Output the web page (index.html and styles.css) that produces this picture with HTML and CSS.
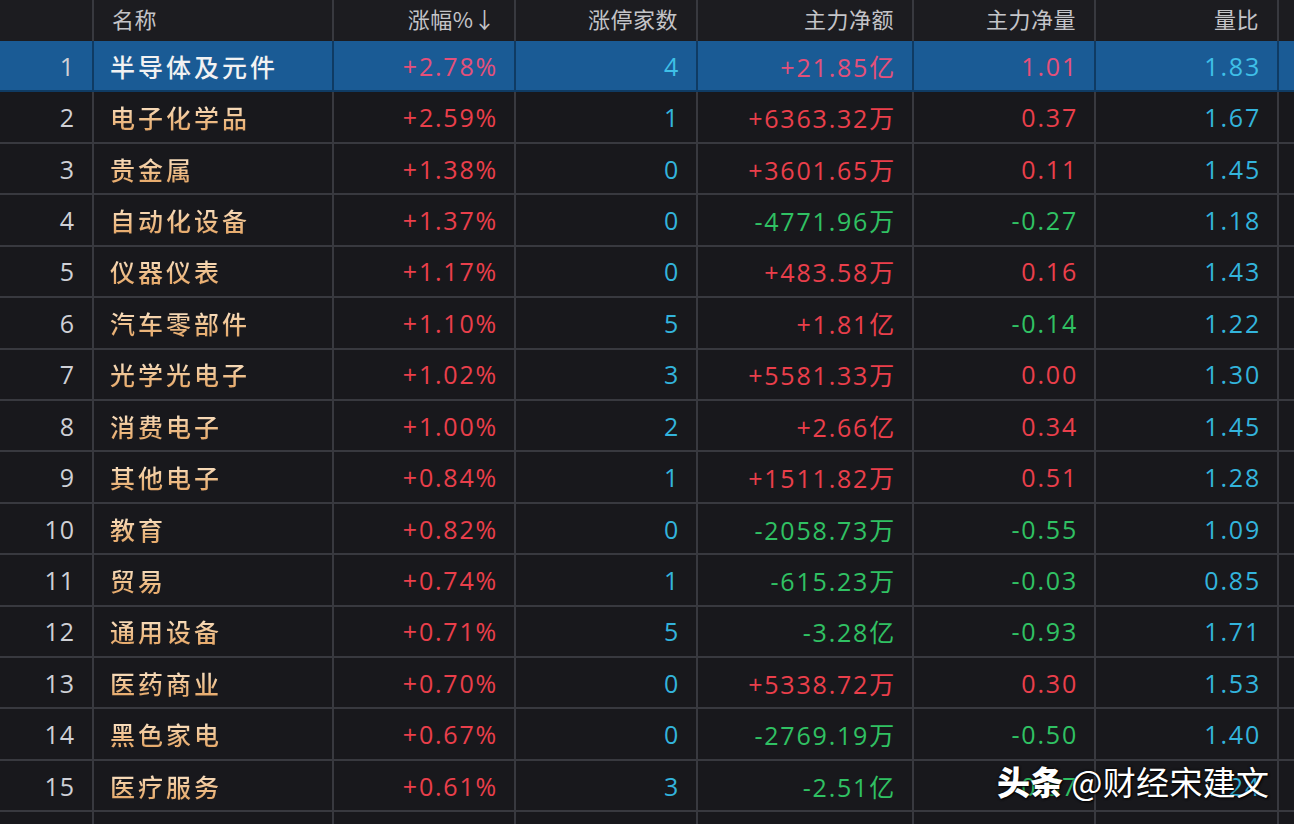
FILE: index.html
```html
<!DOCTYPE html>
<html lang="zh-CN">
<head>
<meta charset="utf-8">
<title>板块排行</title>
<link rel="stylesheet" href="styles.css">
</head>
<body>
<div class="board">
  <div class="row head">
    <div class="cell"></div>
    <div class="cell name">名称</div>
    <div class="cell">涨幅%↓</div>
    <div class="cell">涨停家数</div>
    <div class="cell">主力净额</div>
    <div class="cell">主力净量</div>
    <div class="cell">量比</div>
    <div class="cell last"></div>
  </div>
  <div class="row sel">
    <div class="cell idx">1</div><div class="cell name"><span class="nm">半导体及元件</span></div>
    <div class="cell up">+2.78%</div><div class="cell cy">4</div><div class="cell up">+21.85亿</div><div class="cell up">1.01</div><div class="cell cy">1.83</div><div class="cell last"></div>
  </div>
  <div class="row">
    <div class="cell idx">2</div><div class="cell name"><span class="nm">电子化学品</span></div>
    <div class="cell up">+2.59%</div><div class="cell cy">1</div><div class="cell up">+6363.32万</div><div class="cell up">0.37</div><div class="cell cy">1.67</div><div class="cell last"></div>
  </div>
  <div class="row">
    <div class="cell idx">3</div><div class="cell name"><span class="nm">贵金属</span></div>
    <div class="cell up">+1.38%</div><div class="cell cy">0</div><div class="cell up">+3601.65万</div><div class="cell up">0.11</div><div class="cell cy">1.45</div><div class="cell last"></div>
  </div>
  <div class="row">
    <div class="cell idx">4</div><div class="cell name"><span class="nm">自动化设备</span></div>
    <div class="cell up">+1.37%</div><div class="cell cy">0</div><div class="cell dn">-4771.96万</div><div class="cell dn">-0.27</div><div class="cell cy">1.18</div><div class="cell last"></div>
  </div>
  <div class="row">
    <div class="cell idx">5</div><div class="cell name"><span class="nm">仪器仪表</span></div>
    <div class="cell up">+1.17%</div><div class="cell cy">0</div><div class="cell up">+483.58万</div><div class="cell up">0.16</div><div class="cell cy">1.43</div><div class="cell last"></div>
  </div>
  <div class="row">
    <div class="cell idx">6</div><div class="cell name"><span class="nm">汽车零部件</span></div>
    <div class="cell up">+1.10%</div><div class="cell cy">5</div><div class="cell up">+1.81亿</div><div class="cell dn">-0.14</div><div class="cell cy">1.22</div><div class="cell last"></div>
  </div>
  <div class="row">
    <div class="cell idx">7</div><div class="cell name"><span class="nm">光学光电子</span></div>
    <div class="cell up">+1.02%</div><div class="cell cy">3</div><div class="cell up">+5581.33万</div><div class="cell up">0.00</div><div class="cell cy">1.30</div><div class="cell last"></div>
  </div>
  <div class="row">
    <div class="cell idx">8</div><div class="cell name"><span class="nm">消费电子</span></div>
    <div class="cell up">+1.00%</div><div class="cell cy">2</div><div class="cell up">+2.66亿</div><div class="cell up">0.34</div><div class="cell cy">1.45</div><div class="cell last"></div>
  </div>
  <div class="row">
    <div class="cell idx">9</div><div class="cell name"><span class="nm">其他电子</span></div>
    <div class="cell up">+0.84%</div><div class="cell cy">1</div><div class="cell up">+1511.82万</div><div class="cell up">0.51</div><div class="cell cy">1.28</div><div class="cell last"></div>
  </div>
  <div class="row">
    <div class="cell idx">10</div><div class="cell name"><span class="nm">教育</span></div>
    <div class="cell up">+0.82%</div><div class="cell cy">0</div><div class="cell dn">-2058.73万</div><div class="cell dn">-0.55</div><div class="cell cy">1.09</div><div class="cell last"></div>
  </div>
  <div class="row">
    <div class="cell idx">11</div><div class="cell name"><span class="nm">贸易</span></div>
    <div class="cell up">+0.74%</div><div class="cell cy">1</div><div class="cell dn">-615.23万</div><div class="cell dn">-0.03</div><div class="cell cy">0.85</div><div class="cell last"></div>
  </div>
  <div class="row">
    <div class="cell idx">12</div><div class="cell name"><span class="nm">通用设备</span></div>
    <div class="cell up">+0.71%</div><div class="cell cy">5</div><div class="cell dn">-3.28亿</div><div class="cell dn">-0.93</div><div class="cell cy">1.71</div><div class="cell last"></div>
  </div>
  <div class="row">
    <div class="cell idx">13</div><div class="cell name"><span class="nm">医药商业</span></div>
    <div class="cell up">+0.70%</div><div class="cell cy">0</div><div class="cell up">+5338.72万</div><div class="cell up">0.30</div><div class="cell cy">1.53</div><div class="cell last"></div>
  </div>
  <div class="row">
    <div class="cell idx">14</div><div class="cell name"><span class="nm">黑色家电</span></div>
    <div class="cell up">+0.67%</div><div class="cell cy">0</div><div class="cell dn">-2769.19万</div><div class="cell dn">-0.50</div><div class="cell cy">1.40</div><div class="cell last"></div>
  </div>
  <div class="row">
    <div class="cell idx">15</div><div class="cell name"><span class="nm">医疗服务</span></div>
    <div class="cell up">+0.61%</div><div class="cell cy">3</div><div class="cell dn">-2.51亿</div><div class="cell dn">-0.57</div><div class="cell cy">1.24</div><div class="cell last"></div>
  </div>
  <div class="row">
    <div class="cell"></div><div class="cell"></div><div class="cell"></div><div class="cell"></div><div class="cell"></div><div class="cell"></div><div class="cell"></div><div class="cell last"></div>
  </div>
  <div class="mark"><b>头条</b> @财经宋建文</div>
</div>
</body>
</html>
```
FILE: styles.css
```css
html, body {
  margin: 0;
  padding: 0;
  background: #18181c;
  overflow: hidden;
}
.board {
  position: relative;
  width: 1294px;
  height: 824px;
  overflow: hidden;
  background: #18181c;
  font-family: "Open Sans", "Noto Sans CJK SC", sans-serif;
}
.row {
  display: grid;
  grid-template-columns: 94px 240px 182px 182px 216px 182px 183px 1fr;
  height: 51.43px;
  box-sizing: border-box;
  border-bottom: 2px solid #38393f;
}
.cell {
  box-sizing: border-box;
  border-right: 2px solid #38393f;
  display: flex;
  align-items: center;
  justify-content: flex-end;
  padding-right: 16px;
  font-size: 25px;
  letter-spacing: 1.8px;
  white-space: nowrap;
}
.cell.last { border-right: none; }
.cell.name {
  justify-content: flex-start;
  padding-left: 16px;
  padding-right: 0;
  font-family: "Noto Sans CJK SC", sans-serif;
}
.head {
  height: 41px;
  background: #1c1c20;
  border-bottom: none;
}
.head .cell {
  color: #c4c4c8;
  font-family: "Noto Sans CJK SC", sans-serif;
  font-size: 22px;
  letter-spacing: 0.5px;
  padding-bottom: 6px;
  padding-right: 18px;
}
.head .cell.name { padding-left: 18px; }
.idx { color: #cfd0d6; padding-right: 17px; letter-spacing: 1px; }
.nm {
  font-size: 25px;
  font-weight: 500;
  letter-spacing: 3px;
  background: linear-gradient(180deg, #fae7cf 10%, #efc08c 55%, #e4a463 95%);
  -webkit-background-clip: text;
  background-clip: text;
  color: transparent;
}
.up { color: #ea3f4b; }
.dn { color: #30c163; }
.cy { color: #33b4dc; }
.sel {
  background: #1a5b95;
  border-bottom-color: #0f3b63;
}
.sel .cell { border-right-color: #0f3b63; }
.sel .cell.last { border-right: none; }
.sel .up { color: #e5507a; }
.sel .nm {
  background: none;
  color: #f2f2f2;
}
.sel .cy { color: #3fc0e8; }
.mark {
  position: absolute;
  left: 997px;
  top: 757px;
  color: #ffffff;
  font-family: "Noto Sans CJK SC", sans-serif;
  font-size: 33px;
  letter-spacing: 0.3px;
  text-shadow: 0 0 3px rgba(0,0,0,0.9), 1px 1px 2px rgba(0,0,0,0.9);
  white-space: nowrap;
}
.mark b { font-weight: 900; }
```
